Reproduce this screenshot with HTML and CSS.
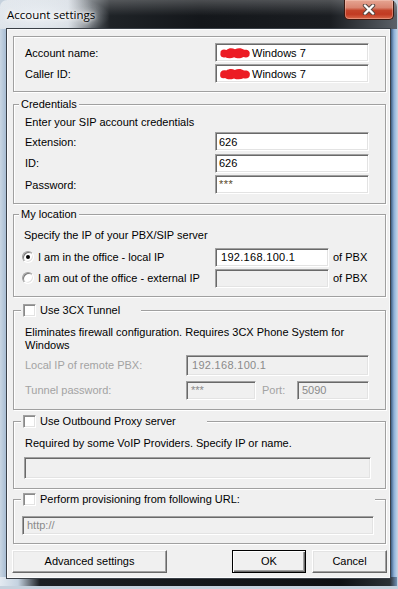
FILE: index.html
```html
<!DOCTYPE html>
<html>
<head>
<meta charset="utf-8">
<title>Account settings</title>
<link rel="stylesheet" href="styles.css">
</head>
<body>
<div class="window">
  <div class="titlebar">
    <span class="title">Account settings</span>
    <button class="close-btn" aria-label="Close">
      <svg width="14" height="11" viewBox="0 0 14 11"><path d="M3 1.5 L11 9.5 M11 1.5 L3 9.5" stroke="#5b4a45" stroke-width="4.4" stroke-linecap="round"/><path d="M3 1.5 L11 9.5 M11 1.5 L3 9.5" stroke="#fff" stroke-width="2.4" stroke-linecap="round"/></svg>
    </button>
  </div>
  <div class="client">
    <div class="group g-account">
      <div class="rows cols-a">
        <span class="lbl">Account name:</span>
        <div class="input"><svg class="redact" width="32" height="12" viewBox="0 0 32 12"><path d="M1.5 6 C1 3 4.5 1.5 7.5 3 C10 0.5 13.5 1 16 2.2 C19 0.5 23 1 25.2 2.8 C28.5 2 31.5 4.2 30.6 7 C31 10 27.5 11.2 24.5 10 C21.5 11.8 17.5 11.5 15.2 10.2 C12 11.8 8.5 11.4 6.2 10.2 C3 11 0.8 9 1.5 6 Z" fill="#ec1c24"/></svg>Windows 7</div>
        <span class="lbl">Caller ID:</span>
        <div class="input"><svg class="redact" width="32" height="12" viewBox="0 0 32 12"><path d="M1.2 6.2 C0.8 3.2 4 1.2 7.2 2.6 C9.8 0.8 13.2 0.6 15.8 2 C18.8 0.4 22.8 0.8 25 2.6 C28.4 1.8 31.6 4 30.8 6.8 C31.2 9.8 27.8 11.4 24.6 10.2 C21.6 11.8 17.6 11.6 15 10.4 C11.8 11.6 8.2 11.6 6 10 C2.8 11 0.6 9.2 1.2 6.2 Z" fill="#ec1c24"/></svg>Windows 7</div>
      </div>
    </div>

    <fieldset class="group g-cred">
      <legend class="legend">Credentials</legend>
      <p class="desc">Enter your SIP account credentials</p>
      <div class="rows cols-a">
        <span class="lbl">Extension:</span>
        <div class="input">626</div>
        <span class="lbl">ID:</span>
        <div class="input">626</div>
        <span class="lbl">Password:</span>
        <div class="input pw">***</div>
      </div>
    </fieldset>

    <fieldset class="group g-loc">
      <legend class="legend">My location</legend>
      <p class="desc">Specify the IP of your PBX/SIP server</p>
      <div class="loc-row">
        <span class="radio checked"></span>
        <span class="radio-lbl">I am in the office - local IP</span>
        <div class="input ip">192.168.100.1</div>
        <span class="suffix">of PBX</span>
      </div>
      <div class="loc-row">
        <span class="radio"></span>
        <span class="radio-lbl">I am out of the office - external IP</span>
        <div class="input ip disabled"></div>
        <span class="suffix">of PBX</span>
      </div>
    </fieldset>

    <fieldset class="group g-tunnel">
      <legend class="legend check-legend"><span class="checkbox"></span>Use 3CX Tunnel</legend>
      <p class="desc two">Eliminates firewall configuration. Requires 3CX Phone System for<br>Windows</p>
      <div class="tun-row r1">
        <span class="lbl dim tun-lbl">Local IP of remote PBX:</span>
        <div class="input disabled tun-ip">192.168.100.1</div>
      </div>
      <div class="tun-row r2">
        <span class="lbl dim tun-lbl">Tunnel password:</span>
        <div class="input disabled tun-pw">***</div>
        <span class="lbl dim port-lbl">Port:</span>
        <div class="input disabled port">5090</div>
      </div>
    </fieldset>

    <fieldset class="group g-proxy">
      <legend class="legend check-legend"><span class="checkbox"></span>Use Outbound Proxy server</legend>
      <p class="desc">Required by some VoIP Providers. Specify IP or name.</p>
      <div class="input disabled proxy-input"></div>
    </fieldset>

    <fieldset class="group g-prov">
      <legend class="legend check-legend"><span class="checkbox"></span>Perform provisioning from following URL:</legend>
      <div class="input disabled prov-input">http://</div>
    </fieldset>

    <div class="buttons">
      <button class="btn adv">Advanced settings</button>
      <button class="btn ok default">OK</button>
      <button class="btn cancel">Cancel</button>
    </div>
  </div>
</div>
</body>
</html>
```

FILE: styles.css
```css
* { box-sizing: border-box; }
html, body { margin: 0; padding: 0; }
body {
  width: 398px;
  height: 589px;
  overflow: hidden;
  background: #c5d1dd;
  font-family: "Liberation Sans", Arial, sans-serif;
  font-size: 11px;
  color: #000;
}

.window {
  width: 397px;
  height: 586px;
  display: flex;
  flex-direction: column;
  border-radius: 7px 7px 0 0;
  overflow: hidden;
  background:
    linear-gradient(90deg, #e3eaf1 0, #c4d2e0 18px, #1c1f23 40px, #0e1013 340px, #2c3136 390px, #6f8fb3 397px) 0 100% / 100% 9px no-repeat,
    linear-gradient(90deg, #c9d6e3 0, #a8bdd3 6px, #5f6a75 7px, #20242a 8px, #20242a 389px, #3f5f84 391px, #8eb0d6 394px, #b9d0e8 397px);
}

.titlebar {
  height: 29px;
  flex: none;
  display: flex;
  align-items: flex-start;
  background:
    radial-gradient(ellipse 70px 22px at 40px 16px, rgba(238, 242, 246, 0.9), rgba(220, 228, 236, 0) 100%),
    linear-gradient(180deg, rgba(255, 255, 255, 0.24) 0, rgba(255, 255, 255, 0.06) 40%, rgba(0, 0, 0, 0) 55%),
    linear-gradient(90deg, #d9e0e7 0, #d0d7df 68px, #5a6066 92px, #1f2327 110px, #14171b 200px, #1a1d21 330px, #5b6168 397px);
}

.title {
  font-family: "Open Sans", "Noto Sans", sans-serif;
  font-size: 11.5px;
  line-height: 16px;
  padding: 7px 0 0 7px;
  color: #000;
  text-shadow: 0 0 6px #fff, 0 0 3px #fff, 0 0 10px rgba(255, 255, 255, 0.8);
}

.close-btn {
  margin-left: auto;
  margin-right: 3px;
  width: 50px;
  height: 20px;
  padding: 0;
  border: 1px solid #3b1810;
  border-top: 0;
  border-radius: 0 0 5px 5px;
  background: linear-gradient(180deg, #e6a592 0, #d98571 40%, #c4442a 55%, #c13a22 75%, #d9684a 100%);
  box-shadow: inset 0 0 0 1px rgba(255, 220, 210, 0.35);
  display: flex;
  align-items: center;
  justify-content: center;
}
.close-btn svg { display: block; }

.client {
  flex: none;
  margin: 0 7px;
  background: #f0f0f0;
  border: 1px solid #fafbfc;
  box-shadow: 0 0 0 1px #3a4047;
  padding: 6px 3px 4px 5px;
  display: flex;
  flex-direction: column;
}

.group {
  margin: 0;
  min-width: 0;
  border: 1px solid #a0a0a0;
  box-shadow: 1px 1px 0 #fff, inset 1px 1px 0 #fff;
}

.legend {
  padding: 0 2px;
  line-height: 13px;
  height: 13px;
  background: #f0f0f0;
}

.check-legend {
  display: flex;
  align-items: center;
}

.checkbox {
  width: 13px;
  height: 13px;
  flex: none;
  margin-right: 4px;
  background: #fff;
  border: 1px solid;
  border-color: #a0a0a0 #fff #fff #a0a0a0;
  box-shadow: inset 1px 1px 0 #8a8a8a, inset -1px -1px 0 #e3e3e3;
}

.desc {
  margin: 0;
  line-height: 14px;
  white-space: nowrap;
}

.lbl { white-space: nowrap; }
.dim { color: #a3a3a3; }

.rows {
  display: grid;
  align-items: center;
}
.cols-a {
  grid-template-columns: 190px 154px;
}

.input {
  height: 19px;
  display: flex;
  align-items: center;
  padding: 0 3px;
  background: #fff;
  border: 1px solid;
  border-color: #a0a0a0 #fff #fff #a0a0a0;
  box-shadow: inset 1px 1px 0 #696969, inset -1px -1px 0 #e3e3e3;
  white-space: nowrap;
  overflow: hidden;
}
.input.disabled {
  background: #f0f0f0;
  color: #8a8a8a;
}
.redact { display: block; flex: none; margin-right: 1px; }
.pw { align-items: flex-start; padding-top: 2px; color: #5a4a2a; letter-spacing: 0.5px; }

/* account */
.g-account {
  padding: 6px 16px 8px 11px;
}
.g-account .rows { row-gap: 2px; }

/* credentials */
.g-cred {
  margin-top: 6px;
  padding: 0 16px 9px 11px;
}
.g-cred .legend { margin-left: -6px; }
.g-cred .desc { margin-top: 4px; }
.g-cred .rows { margin-top: 3px; row-gap: 2.5px; }

/* location */
.g-loc {
  margin-top: 4px;
  padding: 0 16px 8px 8px;
}
.g-loc .legend { margin-left: -3px; }
.g-loc .desc { margin: 7px 0 0 2px; }
.loc-row {
  display: flex;
  align-items: center;
  height: 19px;
}
.loc-row:first-of-type { margin-top: 5.5px; }
.loc-row + .loc-row { margin-top: 2px; }
.radio {
  width: 12px;
  height: 12px;
  flex: none;
  border-radius: 50%;
  background: #fff;
  border: 1px solid;
  border-color: #a0a0a0 #fff #fff #a0a0a0;
  box-shadow: inset 1px 1px 0 #7a7a7a, inset -1px -1px 0 #e3e3e3;
  display: grid;
  place-items: center;
  margin-right: 4px;
}
.radio.checked::after {
  content: "";
  width: 4px;
  height: 4px;
  border-radius: 50%;
  background: #000;
}
.radio-lbl {
  width: 177px;
  flex: none;
  white-space: nowrap;
}
.ip {
  width: 114px;
  flex: none;
  padding-left: 5px;
  letter-spacing: 0.3px;
}
.suffix { margin-left: 4px; }

/* tunnel */
.g-tunnel {
  margin-top: 7px;
  padding: 0 16px 9px 11px;
}
.g-tunnel .legend { margin-left: -4px; width: 120px; }
.g-tunnel .desc { margin-top: 9px; line-height: 13.5px; }
.tun-row {
  display: flex;
  align-items: center;
}
.tun-row.r1 { margin-top: 2px; }
.tun-row.r2 { margin-top: 5px; }
.tun-lbl { width: 161px; flex: none; }
.tun-ip { width: 183px; height: 21px; padding-left: 5px; letter-spacing: 0.3px; }
.tun-pw { width: 70px; padding-left: 4px; align-items: flex-start; padding-top: 2px; }
.port-lbl { width: 35px; margin-left: 6px; }
.port { width: 72px; padding-left: 4px; }

/* proxy */
.g-proxy {
  margin-top: 5px;
  padding: 0 14px 9px 10px;
}
.g-proxy .legend { margin-left: -3px; width: 186px; }
.g-proxy .desc { margin: 8.5px 0 0 1px; }
.proxy-input { width: 347px; height: 22px; margin-top: 6.5px; }

/* provisioning */
.g-prov {
  margin-top: 4px;
  padding: 0 11px 8px 8px;
}
.g-prov .legend { margin-left: -1px; width: 354px; }
.prov-input { width: 352px; margin-top: 10px; padding-left: 4px; color: #7a7a7a; }

/* buttons */
.buttons {
  display: flex;
  margin: 6px -1px 0 -1px;
}
.btn {
  height: 23px;
  padding: 0;
  font-family: inherit;
  font-size: 11px;
  color: #000;
  background: #f0f0f0;
  border: 1px solid;
  border-color: #fff #696969 #696969 #fff;
  box-shadow: inset -1px -1px 0 #a0a0a0, inset 1px 1px 0 #e3e3e3;
}
.btn.adv { width: 155px; }
.btn.ok { width: 74px; margin-left: auto; }
.btn.cancel { width: 75px; margin-left: 6px; }
.btn.default {
  border-color: #000;
  box-shadow: inset 1px 1px 0 #fff, inset -1px -1px 0 #696969, inset -2px -2px 0 #a0a0a0;
}
```
